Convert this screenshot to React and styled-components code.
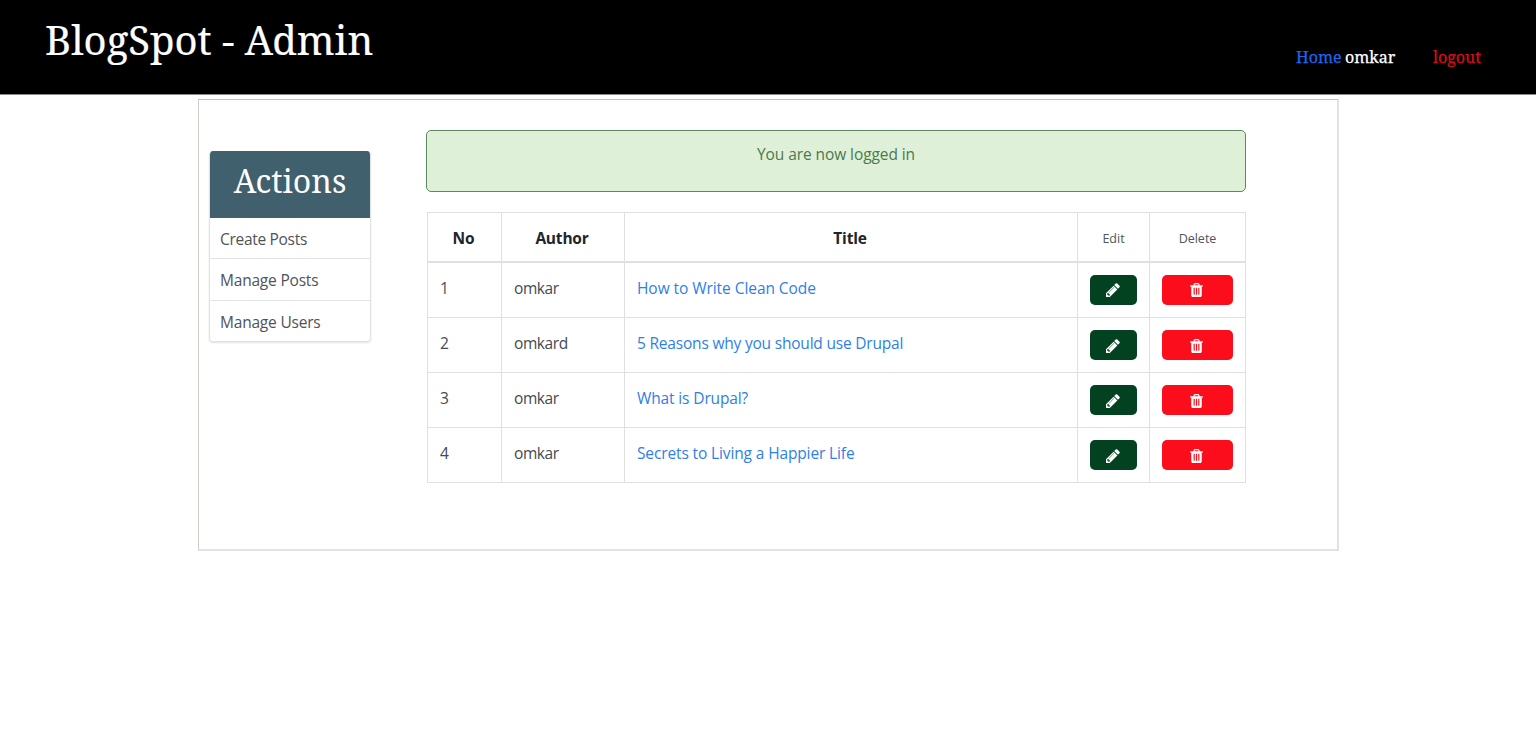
import React from "react";
import styled, { createGlobalStyle } from "styled-components";

const GlobalStyle = createGlobalStyle`
  *, *::before, *::after { box-sizing: border-box; }
  body {
    margin: 0;
    background: #fff;
    color: #444a50;
    font: 15.5px/24px "Open Sans", "Noto Sans", sans-serif;
  }
  a { text-decoration: none; color: inherit; }
  h1, h2, p, ul { margin: 0; padding: 0; font-weight: 400; }
`;

const serif = `"Noto Serif", "DejaVu Serif Condensed", "DejaVu Serif", serif`;

const Header = styled.header`
  display: flex;
  justify-content: space-between;
  height: 95px;
  padding: 15px 54px 0 45px;
  background: #000;
  border-bottom: 1px solid #888;
  font-family: ${serif};
  font-stretch: condensed;
`;

const Brand = styled.h1`
  font-size: 40px;
  line-height: 50px;
  color: #fff;
  white-space: nowrap;
  -webkit-text-stroke: 0.2px currentColor;
`;

const Nav = styled.nav`
  display: flex;
  padding-top: 30px;
  font-size: 16px;
  line-height: 24px;
`;

const NavItem = styled.a`
  width: ${(p) => p.$width}px;
  margin-left: ${(p) => p.$gap || 0}px;
  color: ${(p) => p.$color};
  white-space: nowrap;
  -webkit-text-stroke: 0.25px currentColor;
`;

const Panel = styled.main`
  display: flex;
  align-items: flex-start;
  width: 1141px;
  height: 452px;
  margin: 4px 0 0 198px;
  border: 1px solid;
  border-width: 1px 2px 2px 1px;
  border-color: #bfbfbf #e2e2e2 #e2e2e2 #cfcfca;
`;

const Sidebar = styled.aside`
  width: 162px;
  margin: 51px 0 0 10px;
  border: 1px solid #e2e3e4;
  border-top: 0;
  border-radius: 4px;
  box-shadow: 0 1px 2px rgba(0, 0, 0, 0.12);
  overflow: hidden;
`;

const SidebarTitle = styled.h2`
  height: 67px;
  padding-top: 7px;
  background: #41606e;
  color: #fff;
  font-family: ${serif};
  font-stretch: condensed;
  font-size: 32px;
  line-height: 46px;
  text-align: center;
`;

const SidebarLink = styled.a`
  display: block;
  height: ${(p) => p.$height}px;
  padding: 9px 0 0 10px;
  color: #505357;
  letter-spacing: ${(p) => p.$spacing || 0}px;
  & + & { border-top: 1px solid #e2e3e4; }
`;

const Content = styled.section`
  width: 820px;
  margin: 30px 0 0 55px;
`;

const Alert = styled.div`
  height: 62px;
  padding-top: 11px;
  border: 1px solid #5b8a5c;
  border-radius: 5px;
  background: #dff0d8;
  color: #4b7a4c;
  text-align: center;
  letter-spacing: -0.08px;
`;

const Table = styled.table`
  width: 819px;
  margin: 20px 0 0 1px;
  table-layout: fixed;
  border-collapse: collapse;
`;

const Heading = styled.th`
  height: 49px;
  padding: ${(p) => (p.$small ? "5px 0 0" : "2px 2px 0 0")};
  border: 1px solid #dee0e2;
  border-bottom-width: 2px;
  color: ${(p) => (p.$small ? "#50555a" : "#212529")};
  font-size: ${(p) => (p.$small ? "12.5px" : "15.5px")};
  font-weight: ${(p) => (p.$small ? 400 : 700)};
  letter-spacing: ${(p) => (p.$small ? 0 : "-0.2px")};
  text-align: center;
`;

const Row = styled.tr`
  height: 55px;
  &:first-child { height: 56px; }
`;

const Cell = styled.td`
  padding: ${(p) => (p.$action ? 12 : 13)}px 12px 0;
  border: 1px solid #dee0e2;
  vertical-align: top;
  letter-spacing: ${(p) => p.$spacing || 0}px;
`;

const PostLink = styled.a`
  color: #2f7fe6;
  white-space: nowrap;
  letter-spacing: ${(p) => p.$spacing || 0}px;
`;

const ActionButton = styled.button`
  display: flex;
  align-items: center;
  justify-content: center;
  width: 100%;
  height: 30px;
  padding: 0 2px 0 0;
  border: 0;
  border-radius: 5px;
  background: ${(p) => p.$color};
  color: #fff;
`;

const Icon = styled.svg`
  display: block;
  width: ${(p) => p.$width}px;
  height: ${(p) => p.$height}px;
  margin-top: 1px;
  fill: currentColor;
`;

const PencilIcon = () => (
  <Icon $width={14} $height={14} viewBox="0 128 1536 1536">
    <path d="M363 1536l91-91-235-235-91 91v107h128v128h107zM886 608q0-22-22-22-10 0-17 7l-542 542q-7 7-7 17 0 22 22 22 10 0 17-7l542-542q7-7 7-17zM832 416l416 416-832 832h-416v-416zM1515 512q0 53-37 90l-166 166-416-416 166-165q36-38 90-38 53 0 91 38l235 234q37 39 37 91z" />
  </Icon>
);

const TrashIcon = () => (
  <Icon $width={13} $height={14} viewBox="0 128 1408 1536">
    <path
      fillRule="evenodd"
      d="M512 1376v-704q0-14-9-23t-23-9h-64q-14 0-23 9t-9 23v704q0 14 9 23t23 9h64q14 0 23-9t9-23zM768 1376v-704q0-14-9-23t-23-9h-64q-14 0-23 9t-9 23v704q0 14 9 23t23 9h64q14 0 23-9t9-23zM1024 1376v-704q0-14-9-23t-23-9h-64q-14 0-23 9t-9 23v704q0 14 9 23t23 9h64q14 0 23-9t9-23zM480 384h448l-48-117q-7-9-17-11h-317q-10 2-17 11zM1408 416v64q0 14-9 23t-23 9h-96v948q0 83-47 143.500t-113 60.500h-832q-66 0-113-58.500t-47-141.500v-952h-96q-14 0-23-9t-9-23v-64q0-14 9-23t23-9h309l70-167q15-37 54-63t79-26h320q40 0 79 26t54 63l70 167h309q14 0 23 9t9 23z"
    />
  </Icon>
);

const actions = [
  { label: "Create Posts", spacing: -0.3, height: 40 },
  { label: "Manage Posts", spacing: -0.2, height: 42 },
  { label: "Manage Users", spacing: -0.2, height: 41 },
];

const posts = [
  { author: "omkar", title: "How to Write Clean Code", spacing: -0.06 },
  { author: "omkard", title: "5 Reasons why you should use Drupal", spacing: -0.2 },
  { author: "omkar", title: "What is Drupal?", spacing: -0.13 },
  { author: "omkar", title: "Secrets to Living a Happier Life", spacing: -0.13 },
];

const columns = [74, 123, 453, 72, 96];

export default function App() {
  return (
    <>
      <GlobalStyle />
      <Header>
        <Brand>BlogSpot - Admin</Brand>
        <Nav>
          <NavItem $color="#1a66f0" $width={49}>Home</NavItem>
          <NavItem $color="#fff" $width={51}>omkar</NavItem>
          <NavItem $color="#d80f16" $width={49} $gap={37}>logout</NavItem>
        </Nav>
      </Header>
      <Panel>
        <Sidebar>
          <SidebarTitle>Actions</SidebarTitle>
          {actions.map((action) => (
            <SidebarLink key={action.label} $spacing={action.spacing} $height={action.height}>
              {action.label}
            </SidebarLink>
          ))}
        </Sidebar>
        <Content>
          <Alert>You are now logged in</Alert>
          <Table>
            <colgroup>
              {columns.map((width, i) => (
                <col key={i} width={width} />
              ))}
            </colgroup>
            <thead>
              <tr>
                <Heading>No</Heading>
                <Heading>Author</Heading>
                <Heading>Title</Heading>
                <Heading $small>Edit</Heading>
                <Heading $small>Delete</Heading>
              </tr>
            </thead>
            <tbody>
              {posts.map((post, i) => (
                <Row key={post.title}>
                  <Cell>{i + 1}</Cell>
                  <Cell $spacing={-0.4}>{post.author}</Cell>
                  <Cell><PostLink $spacing={post.spacing}>{post.title}</PostLink></Cell>
                  <Cell $action><ActionButton $color="#034220"><PencilIcon /></ActionButton></Cell>
                  <Cell $action><ActionButton $color="#fb0d1b"><TrashIcon /></ActionButton></Cell>
                </Row>
              ))}
            </tbody>
          </Table>
        </Content>
      </Panel>
    </>
  );
}
